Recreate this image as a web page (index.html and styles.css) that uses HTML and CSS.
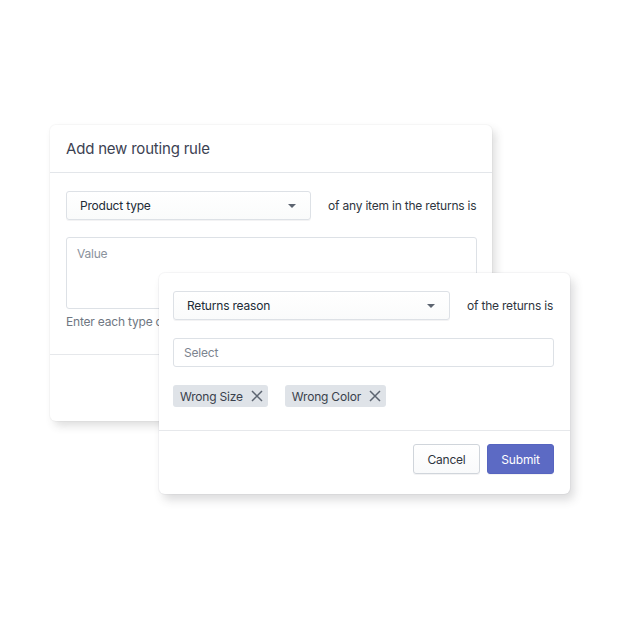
FILE: index.html
```html
<!DOCTYPE html>
<html>
<head>
<meta charset="utf-8">
<link rel="stylesheet" href="styles.css">
</head>
<body>
<div class="stage">
  <div class="card card-main">
    <div class="card-header">Add new routing rule</div>
    <div class="card-body">
      <div class="row">
        <div class="select select-main"><span>Product type</span><span class="caret"></span></div>
        <span class="row-text">of any item in the returns is</span>
      </div>
      <div class="textarea">Value</div>
      <div class="help">Enter each type on a new line</div>
    </div>
    <div class="card-footer"></div>
  </div>

  <div class="card card-float">
    <div class="float-body">
      <div class="row">
        <div class="select select-float"><span>Returns reason</span><span class="caret"></span></div>
        <span class="row-text">of the returns is</span>
      </div>
      <div class="input">Select</div>
      <div class="chips">
        <span class="chip">Wrong Size <svg class="x" viewBox="0 0 12 12"><path d="M1 1l10 10M11 1L1 11"/></svg></span>
        <span class="chip">Wrong Color <svg class="x" viewBox="0 0 12 12"><path d="M1 1l10 10M11 1L1 11"/></svg></span>
      </div>
    </div>
    <div class="float-footer">
      <button class="btn">Cancel</button>
      <button class="btn btn-primary">Submit</button>
    </div>
  </div>
</div>
</body>
</html>
```

FILE: styles.css
```css
* { box-sizing: border-box; }
html, body { margin: 0; padding: 0; background: #ffffff; }
body {
  font-family: Inter, "Noto Sans", "Liberation Sans", sans-serif;
  color: #212b36;
  width: 620px;
  height: 620px;
  overflow: hidden;
  letter-spacing: -0.2px;
}
.stage {
  position: relative;
  width: 620px;
  height: 620px;
  padding: 125px 0 0 50px;
}
.card {
  background: #fff;
  border-radius: 6px;
  box-shadow: 0 0 0 1px rgba(63, 63, 68, 0.03), 4px 5px 9px rgba(63, 63, 68, 0.17);
}
.card-main {
  width: 442px;
}
.card-header {
  height: 48px;
  padding: 0 16px;
  display: flex;
  align-items: center;
  font-size: 15px;
  color: #3c4252;
  border-bottom: 1px solid #e3e6ea;
}
.card-body {
  padding: 18px 15px 0 16px;
  height: 182px;
  border-bottom: 1px solid #e6e8eb;
}
.row {
  display: flex;
  align-items: center;
}
.select {
  flex-shrink: 0;
  height: 29px;
  border: 1px solid #dde1e6;
  border-radius: 3px;
  background: linear-gradient(#ffffff, #fafbfb);
  box-shadow: 0 1px 0 rgba(22, 29, 37, 0.05);
  display: flex;
  align-items: center;
  justify-content: space-between;
  padding: 0 14px 0 13px;
  font-size: 12px;
  color: #212b36;
}
.select-main { width: 245px; }
.select-float { width: 277px; }
.caret {
  width: 0; height: 0;
  border-left: 4px solid transparent;
  border-right: 4px solid transparent;
  border-top: 4px solid #5c6470;
}
.row-text {
  margin-left: 17px;
  font-size: 12px;
  color: #2f3540;
  white-space: nowrap;
}
.textarea {
  margin-top: 17px;
  height: 72px;
  border: 1px solid #dde1e6;
  border-radius: 3px;
  padding: 8px 10px;
  font-size: 12px;
  color: #8a929c;
}
.help {
  margin-top: 5px;
  font-size: 12px;
  color: #6f7782;
  white-space: nowrap;
}
.card-footer {
  height: 66px;
}
.card-float {
  position: absolute;
  left: 159px;
  top: 273px;
  width: 411px;
  box-shadow: 0 0 0 1px rgba(63, 63, 68, 0.04), 4px 6px 10px rgba(63, 63, 68, 0.18);
}
.float-body {
  padding: 18px 16px 0 14px;
  height: 158px;
  border-bottom: 1px solid #e6e8eb;
}
.input {
  margin-top: 18px;
  height: 29px;
  border: 1px solid #dde1e6;
  border-radius: 3px;
  display: flex;
  align-items: center;
  padding: 0 10px;
  font-size: 12px;
  color: #7c848f;
}
.chips {
  margin-top: 18px;
  display: flex;
  gap: 17px;
}
.chip {
  height: 22px;
  background: #dfe3e8;
  border-radius: 3px;
  display: inline-flex;
  align-items: center;
  padding: 0 5px 0 7px;
  font-size: 12px;
  color: #3a414c;
}
.x {
  width: 12px;
  height: 12px;
  margin-left: 8px;
  stroke: #5c6470;
  stroke-width: 1.5;
  fill: none;
}
.float-footer {
  height: 63px;
  padding: 13px 16px 0 0;
  display: flex;
  justify-content: flex-end;
  gap: 7px;
}
.btn {
  width: 67px;
  height: 30px;
  border: 1px solid #d0d5db;
  border-radius: 3px;
  background: linear-gradient(#ffffff, #f9fafb);
  box-shadow: 0 1px 0 rgba(22, 29, 37, 0.05);
  font-family: inherit;
  letter-spacing: -0.2px;
  font-size: 12px;
  color: #2f3540;
  padding: 0;
}
.btn-primary {
  background: #5c6ac4;
  border-color: #5664c0;
  color: #ffffff;
}
```
